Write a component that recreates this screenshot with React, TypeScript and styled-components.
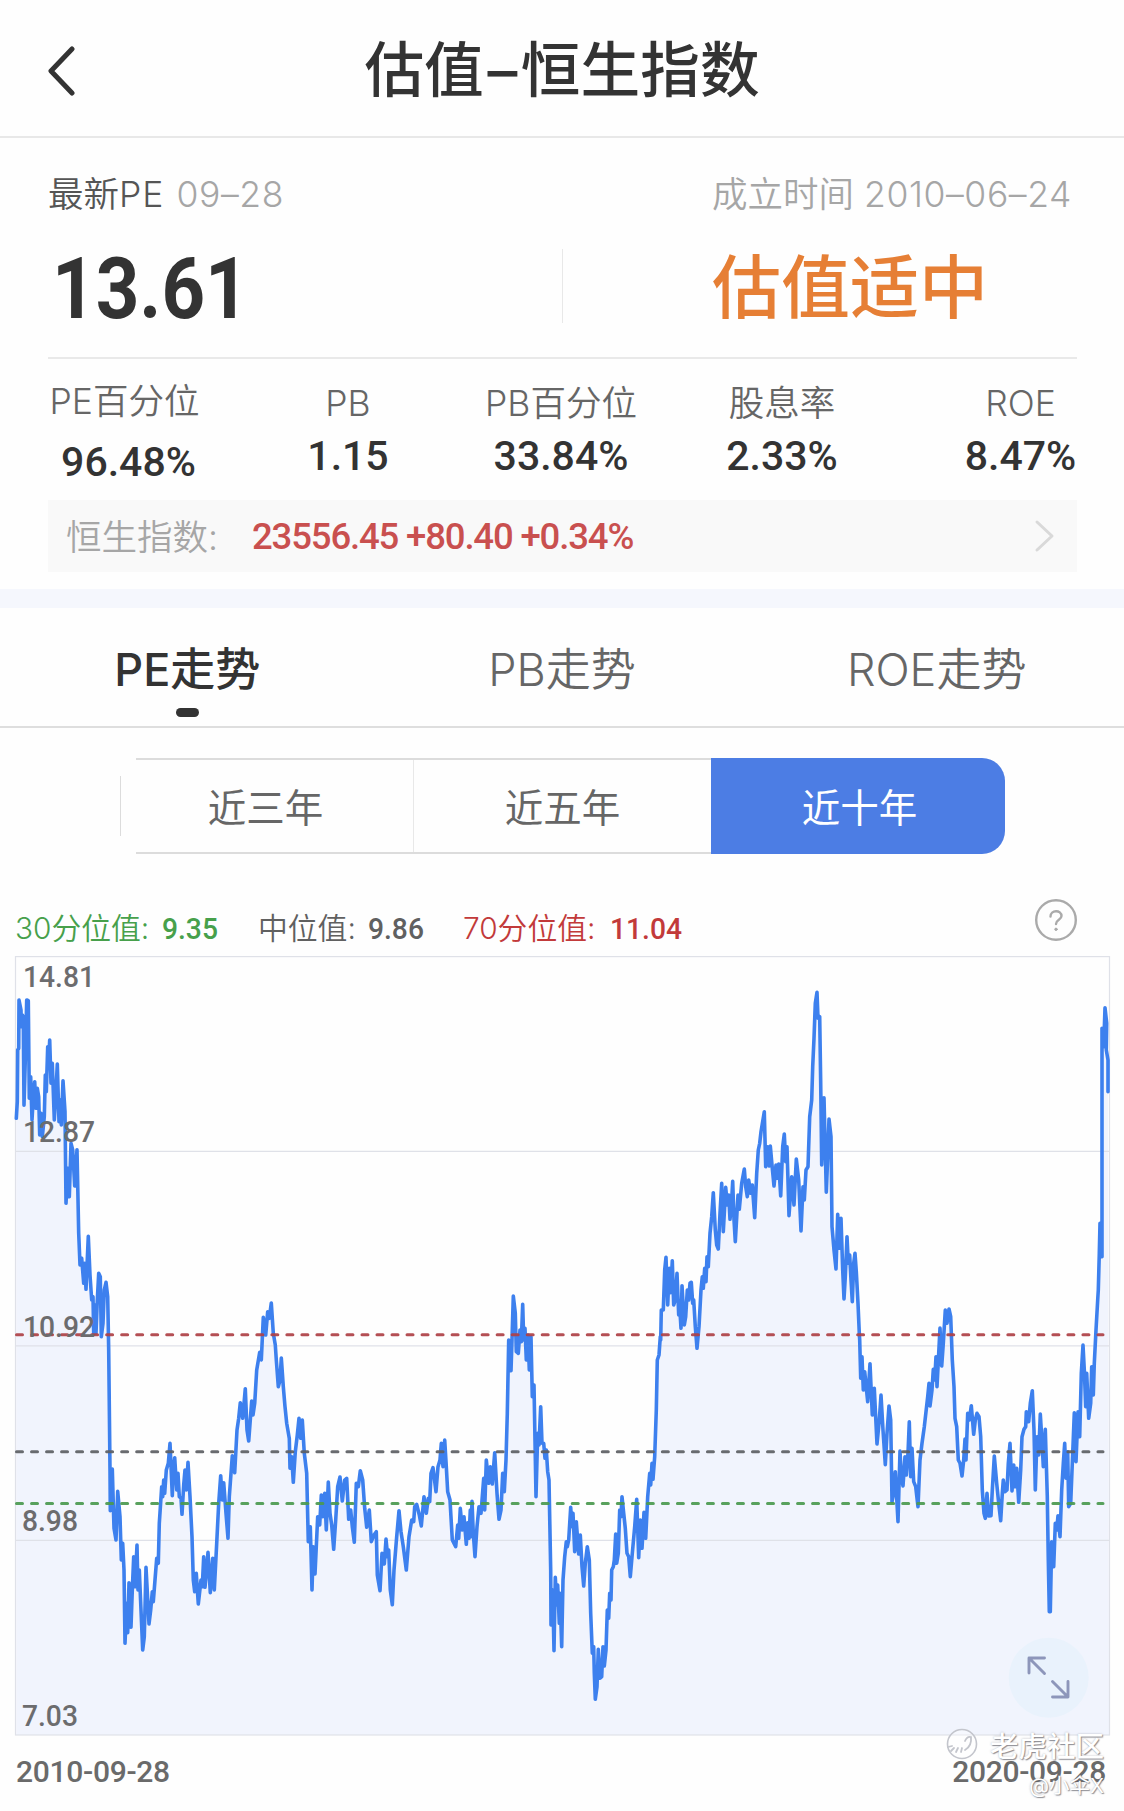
import React from "react";
import styled, { createGlobalStyle } from "styled-components";

const GlobalStyle = createGlobalStyle`
  * { box-sizing: border-box; }
  body {
    margin: 0;
    background: #fefefe;
    font-family: Inter, "Noto Sans CJK SC", sans-serif;
    color: #333;
  }
`;

const numeric = `Roboto, "Noto Sans CJK SC", sans-serif`;

const Page = styled.main`
  width: 1124px;
  height: 1811px;
  overflow: hidden;
  display: flex;
  flex-direction: column;
  white-space: nowrap;
`;

const Header = styled.header`
  height: 138px;
  border-bottom: 2px solid #e8e8e8;
  display: grid;
  grid-template-columns: 48px 1fr 48px;
  align-items: center;
  flex: none;
`;

const BackIcon = styled.svg`
  width: 30px;
  height: 54px;
  margin: 6px 0 0 45px;
`;

const Title = styled.h1`
  margin: 0;
  padding-top: 3px;
  font-size: 59.7px;
  font-weight: 500;
  line-height: 80px;
  text-align: center;
`;

const Dash = styled.span`
  display: inline-block;
  width: 37px;
  text-align: center;
`;

const Summary = styled.section`
  height: 221px;
  margin: 0 47px 0 48px;
  padding-top: 32px;
  border-bottom: 2px solid #e9e9e9;
  display: grid;
  grid-template-columns: 514px 1fr;
  flex: none;
`;

const SummaryColumn = styled.div<{ $indent: number }>`
  display: flex;
  flex-direction: column;
  padding-left: ${(p) => p.$indent}px;
`;

const Caption = styled.div<{ $muted?: boolean }>`
  height: 50px;
  line-height: 50px;
  font-size: 35.5px;
  font-weight: 350;
  color: ${(p) => (p.$muted ? "#a6a6a6" : "#555")};
`;

const Latin = styled.span<{ $tracking: number }>`
  letter-spacing: ${(p) => p.$tracking}px;
`;

const CaptionDate = styled.span`
  color: #a6a6a6;
  margin-left: 2px;
  letter-spacing: 0.6px;
`;

const LatestValue = styled.div`
  margin: 26px 0 0 4px;
  height: 86px;
  line-height: 86px;
  font-family: ${numeric};
  font-size: 86px;
  font-weight: 700;
  transform: scaleX(0.885);
  transform-origin: left;
`;

const Verdict = styled.div`
  margin-top: 23px;
  height: 90px;
  line-height: 90px;
  font-size: 69px;
  font-weight: 500;
  color: #e67f35;
`;

const SplitColumn = styled.div`
  display: flex;
  padding-top: 79px;
  &::before {
    content: "";
    width: 1px;
    height: 74px;
    background: #e8e8e8;
  }
`;

const RightSide = styled.div`
  display: flex;
`;

const Stats = styled.section`
  height: 141px;
  margin: 0 46px 0 47px;
  display: grid;
  grid-template-columns: 155px 292px 134px 308px 142px;
  flex: none;
`;

const Stat = styled.div<{ $top: number; $gap: number; $shift: number }>`
  padding-top: ${(p) => p.$top}px;
  padding-left: ${(p) => p.$shift}px;
  display: flex;
  flex-direction: column;
  align-items: center;
  gap: ${(p) => p.$gap}px;
`;

const StatLabel = styled.div`
  height: 48px;
  line-height: 48px;
  font-size: 35.5px;
  font-weight: 350;
  color: #666;
`;

const StatValue = styled.div<{ $shift?: number }>`
  height: 44px;
  padding-left: ${(p) => p.$shift ?? 0}px;
  line-height: 44px;
  font-family: ${numeric};
  font-size: 41px;
  font-weight: 500;
`;

const QuoteBar = styled.section`
  height: 72px;
  margin: 0 47px 17px 48px;
  padding: 0 20px 0 18px;
  background: #f9f9f9;
  display: flex;
  align-items: center;
  flex: none;
`;

const QuoteName = styled.span`
  width: 186px;
  padding-bottom: 3px;
  font-size: 35.5px;
  font-weight: 350;
  color: #a6a6a6;
`;

const QuoteValue = styled.span`
  flex: 1;
  font-family: ${numeric};
  font-size: 36.5px;
  font-weight: 500;
  letter-spacing: -1.15px;
  color: #c9504f;
`;

const QuoteArrow = styled.svg`
  width: 26px;
  height: 36px;
`;

const Band = styled.div`
  height: 19px;
  background: #f5f7fd;
  flex: none;
`;

const Tabs = styled.nav`
  height: 120px;
  border-bottom: 2px solid #dedede;
  display: grid;
  grid-template-columns: repeat(3, 1fr);
  flex: none;
`;

const Tab = styled.div<{ $active?: boolean }>`
  display: flex;
  flex-direction: column;
  align-items: center;
  padding-top: 30px;
  line-height: 64px;
  font-size: 45px;
  font-weight: ${(p) => (p.$active ? 500 : 350)};
  color: ${(p) => (p.$active ? "#333" : "#666")};
  &::after {
    content: "";
    width: 23px;
    height: 9px;
    margin-top: 6px;
    border-radius: 5px;
    background: ${(p) => (p.$active ? "#333" : "transparent")};
  }
`;

const Segments = styled.div`
  width: 885px;
  height: 96px;
  margin: 30px 0 0 120px;
  display: grid;
  grid-template-columns: 294px 297px 294px;
  flex: none;
`;

const Segment = styled.div<{ $active?: boolean; $first?: boolean }>`
  display: flex;
  align-items: center;
  justify-content: center;
  padding-bottom: 3px;
  padding-left: ${(p) => (p.$active ? 3 : 0)}px;
  padding-right: ${(p) => (p.$first ? 3 : 0)}px;
  font-size: 38.5px;
  color: ${(p) => (p.$active ? "#fff" : "#666")};
  background: ${(p) => (p.$active ? "#4c7de4" : "transparent")};
  border: solid #dcdcdc;
  border-width: ${(p) => (p.$active ? "0" : "2px 0")};
  border-radius: ${(p) => (p.$active ? "0 23px 23px 0" : "0")};
  ${(p) =>
    p.$first &&
    `border-width: 0;
     background:
       linear-gradient(#dcdcdc, #dcdcdc) 16px 0 / 100% 2px no-repeat,
       linear-gradient(#dcdcdc, #dcdcdc) 16px 100% / 100% 2px no-repeat,
       linear-gradient(#dcdcdc, #dcdcdc) 0 50% / 1px 60px no-repeat,
       linear-gradient(#e8e8e8, #e8e8e8) 100% 0 / 1px 100% no-repeat;`}
`;

const Legend = styled.div`
  height: 102px;
  padding: 0 47px 0 15px;
  display: flex;
  align-items: center;
  flex: none;
`;

const LegendItem = styled.div<{ $color: string; $width: number; $label: number }>`
  width: ${(p) => p.$width}px;
  margin-top: 46px;
  display: grid;
  grid-template-columns: ${(p) => p.$label}px auto;
  align-items: baseline;
  line-height: 40px;
  font-size: 29.8px;
  font-weight: 350;
  color: ${(p) => p.$color};
`;

const LegendValue = styled.b`
  font-family: ${numeric};
  font-size: 30px;
  font-weight: 500;
  transform: scaleX(0.94);
  transform-origin: left;
`;

const HelpIcon = styled.svg`
  width: 44px;
  height: 44px;
  margin: 30px -1px 0 auto;
`;

const ChartArea = styled.section`
  position: relative;
  height: 855px;
  flex: none;
`;

const ChartSvg = styled.svg`
  display: block;
  width: 1124px;
  height: 784px;
`;

const AxisLabel = styled.span<{ $x: number; $y: number }>`
  position: absolute;
  left: ${(p) => p.$x}px;
  top: ${(p) => p.$y}px;
  line-height: 30px;
  font-family: ${numeric};
  font-size: 30px;
  font-weight: 500;
  transform: scaleX(0.94);
  transform-origin: left;
  color: #6c6c6e;
`;

const DateRow = styled.div`
  display: flex;
  justify-content: space-between;
  padding: 17px 18px 0 16px;
  line-height: 30px;
  font-family: ${numeric};
  font-size: 30px;
  font-weight: 500;
  letter-spacing: -0.3px;
  color: #6a6a6a;
`;

const Watermark = styled.div`
  position: absolute;
  right: 20px;
  top: 768px;
  display: flex;
  flex-direction: column;
  align-items: flex-end;
  color: #fff;
  text-shadow: 1px 1px 1px rgba(90, 90, 100, 0.65), 0 0 2px rgba(120, 120, 130, 0.5);
`;

const Brand = styled.div`
  display: flex;
  align-items: center;
  gap: 12px;
  height: 40px;
  font-size: 28.5px;
  font-weight: 500;
`;

const Author = styled.div`
  height: 24px;
  line-height: 24px;
  margin-top: 10px;
  font-size: 20.5px;
  font-weight: 400;
`;

type Run = { origin: [number, number]; points: string };

/* Daily series, split into runs; points are in thirds of a pixel from each run's origin. */
const runs: Run[] = [
  {
    origin: [0, 950],
    points:
      "49,505 52,455 53,300 56,295 57,150 63,180 64,230 67,195 70,200 72,466 76,330 80,150 85,152 88,445 92,380 96,510 100,440 104,395 108,475 112,415 116,440 119,555 123,490 127,560 133,500 136,375 139,425 143,290 146,330 149,270 153,400 157,340 163,510 167,440 172,342 177,515 181,450 184,525 189,392 195,485 198,760 203,655 208,740 213,580 218,600 224,708 231,599 236,850 240,945 245,925 251,1000 254,940 258,1018 265,859 270,975 275,1050 279,1040 281,1150 285,1065 288,1150 292,1050 296,970 301,980 304,1160 309,1120 313,1020 318,997 323,1040 326,1200",
  },
  {
    origin: [0, 1290],
    points:
      "326,180 330,540 331,662 337,537 342,715 348,750 353,604 360,680 364,810 368,760 372,840 375,1060 380,940 383,1028 387,878 393,1012 397,900 401,800 405,890 411,765 414,900 418,840 428,1080 433,1040 438,832 447,1002 452,960 457,905 460,935 465,870 470,805 475,820 478,700 485,590 488,620 491,570 494,610 499,540 505,520 510,460 517,617 520,540 524,503 530,600 534,550 538,620 543,625 546,673 551,585 555,540 559,600 564,517 570,620 576,740 580,870 584,905 589,850 595,942 603,870 607,890 611,800 615,892 619,850 624,787 631,908 638,805 643,900 650,760 656,640 662,557 667,630 671,578 678,670 684,745 688,620 697,497 704,548 711,420 716,385 721,338 728,385 736,296 741,420 746,453 755,333 759,375 764,340 770,240 779,187 784,210 790,82 797,135 803,65 808,85 814,39 820,130 826,165 829,210 835,290 840,270 844,204 850,290 855,350 860,400 867,440",
  },
  {
    origin: [280, 1280],
    points:
      "28,475 30,565 35,530 40,607 46,515 52,465 57,415 62,475 67,420 73,520 80,580 85,785 91,740 96,930 100,800 105,882 113,710 119,735 124,645 128,710 134,640 139,750 145,606 150,700 155,735 161,808 167,720 173,620 180,591 187,663 194,600 200,595 206,718 212,690 217,740 223,787 229,610 235,620 241,572 248,600 254,685 260,742 268,690 274,785 282,765 289,755 292,885 300,932 306,820 313,852 318,777 323,830 326,810 331,930 337,974 342,870 350,770 357,692 363,755 370,800 379,870 387,770 395,720 401,725 404,680 410,673 418,705 424,738 432,650 439,700 445,655 449,665 453,580 459,563 468,635 474,560 480,540 484,490 489,560 494,480 499,560 503,635 510,660 517,780 527,800 533,735 536,775 541,685 547,750 552,710 559,793 563,728 567,775 571,690 573,770 576,664 580,760 585,830 591,740 597,680 603,700 611,595 614,690 619,540 626,610 631,560 637,612 644,518 651,640 657,718 663,690 668,580 673,635 678,540 682,400 686,180 693,272 696,180 700,48 706,100 709,215 715,220 720,150 724,185 728,73 731,180 735,145 739,240 744,165 748,270 753,170 757,350 762,315 768,650 773,460 777,495 782,380 786,490 791,490 795,535 799,510 803,575 807,600 812,870 813,1035 818,930 822,1112 826,892 830,975 833,915 838,1030 840,940 845,1100 849,900 854,830 859,785 862,800",
  },
  {
    origin: [500, 1280],
    points:
      "206,780 212,682 216,740 219,700 224,815 229,725 236,822 241,765 246,860 251,918 256,850 262,800 268,840 272,1000 277,1120 281,1100 283,1180 286,1258 291,1220 295,1108 300,1195 305,1190 309,1100 313,1158 318,1110 322,990 326,1015 329,940 333,960 335,870 340,860 343,840 347,762 350,850 355,820 359,690 363,710 366,650 371,700 376,745 381,820 386,830 391,890 397,820 404,740 410,658 416,833 421,720 426,805 432,697 437,775 443,650 449,580 452,615 456,550 459,598 464,530 469,390 472,240 477,225 481,170",
  },
  {
    origin: [640, 950],
    points:
      "62,1170 64,1080 70,1080 74,960 78,922 83,1065 88,955 92,1028 97,932 101,1065 106,1050 111,970 116,1095 119,1070 123,1135 126,1007 133,1125 137,1100 142,1020 146,1050 150,1000 154,997 158,1060 161,1050 166,1130 171,1195 177,1130 183,1020 187,980 190,1015 194,955 198,995 201,920 205,950 210,850 215,800 220,728 226,840 230,885 235,897 240,790 245,700 250,845 257,712 262,765 266,735 270,808 274,770 278,694 282,810 286,875 294,735 298,778 305,700 313,657 317,710 322,740 326,690 332,730 337,705 344,803 350,670 355,600 359,580 363,545 373,485 377,650 383,590 388,648 391,588 396,645 402,708 408,645 412,685 416,642 422,738 428,590 433,552 437,635 441,590 447,797 455,680 462,765 469,627 476,690 483,843 489,710 493,750 498,660 504,650 509,500 515,450 518,350 522,265 526,160 531,127 534,205 539,200 542,400 545,645 552,443 559,727 563,620 567,507 573,560 576,830 582,900 588,957 593,793 598,895 603,805 608,960 612,1047 616,980 621,860 625,940 629,915 633,990 637,1055 641,940 645,910 649,965 654,1060 658,1150",
  },
  {
    origin: [840, 1230],
    points:
      "59,330 62,445 66,380 70,480 74,425 83,515 90,401 97,555 103,475 111,642 118,570 123,495 129,600 136,704 141,610 147,528 152,570 156,815 161,790 166,725 174,875 180,663 184,740 189,768 195,680 199,735 204,670 208,575 212,740 216,655 221,755 227,770 234,830 240,690 246,640 253,590 258,545 263,500 267,460 270,528 276,480 280,418 284,450 288,380 291,470 296,370 300,294 305,408 310,340 316,240 321,280 327,237 332,260 337,390 342,470 345,565 350,590 355,690 360,700 366,738 371,690 375,627 378,690 383,550 388,570 394,527 401,613 406,570 411,550 417,560 422,620 427,780 432,850 436,865 441,790 446,858 453,857 457,780 463,678 470,760 476,820 482,872 487,790 490,750 495,785 501,780 505,700 510,640 516,783 521,705 526,770 530,715 536,817 542,720 546,620 552,598 557,590 559,545 566,575 571,520 577,482 582,600 586,780 591,620 596,675 601,552 607,650 610,710 616,598 622,800 625,990 628,1145 631,1145 635,935 641,1010 646,880 650,900 654,857 660,920 665,780 670,700 674,640 678,745 683,665 686,830 692,820 697,700 703,548 708,695 714,545 719,620 724,430 729,345 733,420 737,530 740,430 746,565 752,520 755,410 760,495 763,400 768,300 773,210",
  },
  {
    origin: [1000, 880],
    points: "295,1230 298,1120 300,1030 306,1130 306,445 311,500 315,383 320,430 319,510 324,540 324,635",
  },
];

const linePoints = runs
  .flatMap(({ origin: [ox, oy], points }) =>
    points.split(" ").map((pair) => {
      const [x, y] = pair.split(",").map(Number);
      return `${(ox + x / 3).toFixed(1)},${(oy + y / 3).toFixed(1)}`;
    }),
  )
  .join(" ");

const gridLines = [1151.3, 1345.8, 1540.4];

const thresholds = [
  { y: 1334.7, color: "#ae4045" },
  { y: 1451.7, color: "#5c5e63" },
  { y: 1503.4, color: "#4b994f" },
];

const axisLabels = [
  { text: "14.81", x: 23, y: 6 },
  { text: "12.87", x: 23, y: 161 },
  { text: "10.92", x: 23, y: 356 },
  { text: "8.98", x: 22, y: 550 },
  { text: "7.03", x: 22, y: 745 },
];

const stats = [
  { label: "PE百分位", value: "96.48%", top: 19, gap: 14, shift: 0, valueShift: 8 },
  { label: "PB", value: "1.15", top: 21, gap: 6, shift: 0, valueShift: 0 },
  { label: "PB百分位", value: "33.84%", top: 21, gap: 6, shift: 0, valueShift: 0 },
  { label: "股息率", value: "2.33%", top: 21, gap: 6, shift: 0, valueShift: 0 },
  { label: "ROE", value: "8.47%", top: 21, gap: 6, shift: 27, valueShift: 0 },
];

function TrendChart() {
  return (
    <ChartSvg viewBox="0 956 1124 784" fill="none">
      <polygon points={`16.3,1735 ${linePoints} 1109,1735`} fill="#f1f4fd" />
      <g stroke="#dfe1e8" strokeWidth="1.2">
        <rect x="15.5" y="956.6" width="1094" height="778.4" />
        {gridLines.map((y) => (
          <path key={y} d={`M15.5 ${y}H1109.5`} />
        ))}
      </g>
      <polyline
        points={linePoints}
        stroke="#3d80ee"
        strokeWidth="3.6"
        strokeLinejoin="round"
        strokeLinecap="round"
      />
      {thresholds.map(({ y, color }) => (
        <path
          key={y}
          d={`M16.5 ${y}H1103`}
          stroke={color}
          strokeWidth="3"
          strokeLinecap="round"
          strokeDasharray="6 9.02"
          opacity="0.92"
        />
      ))}
      <circle cx="1048.7" cy="1677.7" r="40" fill="#e9f2fc" />
      <path
        d="M1029 1673V1658H1044.5M1029.5 1658.5L1044.5 1673.5M1052.5 1697H1068V1681.5M1052.5 1681.5L1067.5 1696.5"
        stroke="#8d96ba"
        strokeWidth="2.9"
        strokeLinecap="round"
        strokeLinejoin="round"
      />
    </ChartSvg>
  );
}

export default function App() {
  return (
    <Page>
      <GlobalStyle />
      <Header>
        <BackIcon viewBox="0 0 30 54" fill="none">
          <path d="M27 5L6 27L27 49" stroke="#333" strokeWidth="5" strokeLinecap="round" strokeLinejoin="round" />
        </BackIcon>
        <Title>
          估值<Dash>–</Dash>恒生指数
        </Title>
      </Header>

      <Summary>
        <SummaryColumn $indent={0}>
          <Caption>
            最新<Latin $tracking={1}>PE</Latin> <CaptionDate>09–28</CaptionDate>
          </Caption>
          <LatestValue>13.61</LatestValue>
        </SummaryColumn>
        <RightSide>
          <SplitColumn />
          <SummaryColumn $indent={149}>
            <Caption $muted>
              成立时间 <Latin $tracking={0.6}>2010–06–24</Latin>
            </Caption>
            <Verdict>估值适中</Verdict>
          </SummaryColumn>
        </RightSide>
      </Summary>

      <Stats>
        {stats.map((s) => (
          <Stat key={s.label} $top={s.top} $gap={s.gap} $shift={s.shift}>
            <StatLabel>{s.label}</StatLabel>
            <StatValue $shift={s.valueShift}>{s.value}</StatValue>
          </Stat>
        ))}
      </Stats>

      <QuoteBar>
        <QuoteName>恒生指数:</QuoteName>
        <QuoteValue>23556.45 +80.40 +0.34%</QuoteValue>
        <QuoteArrow viewBox="0 0 26 36" fill="none">
          <path d="M6 4L21 18L6 32" stroke="#d9d9d9" strokeWidth="3" strokeLinecap="round" strokeLinejoin="round" />
        </QuoteArrow>
      </QuoteBar>

      <Band />

      <Tabs>
        <Tab $active>PE走势</Tab>
        <Tab>PB走势</Tab>
        <Tab>ROE走势</Tab>
      </Tabs>

      <Segments>
        <Segment $first>近三年</Segment>
        <Segment>近五年</Segment>
        <Segment $active>近十年</Segment>
      </Segments>

      <Legend>
        <LegendItem $color="#47a04b" $width={243} $label={147}>
          30分位值:<LegendValue>9.35</LegendValue>
        </LegendItem>
        <LegendItem $color="#606060" $width={205} $label={110}>
          中位值:<LegendValue>9.86</LegendValue>
        </LegendItem>
        <LegendItem $color="#c23a3a" $width={240} $label={147}>
          70分位值:<LegendValue>11.04</LegendValue>
        </LegendItem>
        <HelpIcon viewBox="0 0 44 44" fill="none" stroke="#aaa" strokeLinecap="round">
          <circle cx="22" cy="22" r="19.8" strokeWidth="2.4" />
          <path d="M16.5 18.5C16.5 11.5 27.5 11.5 27.5 18C27.5 22 22 21.5 22 26" strokeWidth="2.4" />
          <circle cx="22" cy="31.3" r="1.2" fill="#aaa" strokeWidth="1" />
        </HelpIcon>
      </Legend>

      <ChartArea>
        <TrendChart />
        {axisLabels.map((l) => (
          <AxisLabel key={l.text} $x={l.x} $y={l.y}>
            {l.text}
          </AxisLabel>
        ))}
        <DateRow>
          <span>2010-09-28</span>
          <span>2020-09-28</span>
        </DateRow>
        <Watermark>
          <Brand>
            <svg width="32" height="32" viewBox="0 0 32 32" fill="none">
              <circle cx="16" cy="16" r="14.5" fill="#fff" fillOpacity="0.35" stroke="#c3c5cc" strokeWidth="1.6" />
              <path d="M2 19L6 18M5 23L8 20M10 24L12 20M15 24L16 20M19 22Q26 18 25 9Q21 8 19 13" stroke="#c3c5cc" strokeWidth="1.8" strokeLinecap="round" />
            </svg>
            老虎社区
          </Brand>
          <Author>@小伞X</Author>
        </Watermark>
      </ChartArea>
    </Page>
  );
}
